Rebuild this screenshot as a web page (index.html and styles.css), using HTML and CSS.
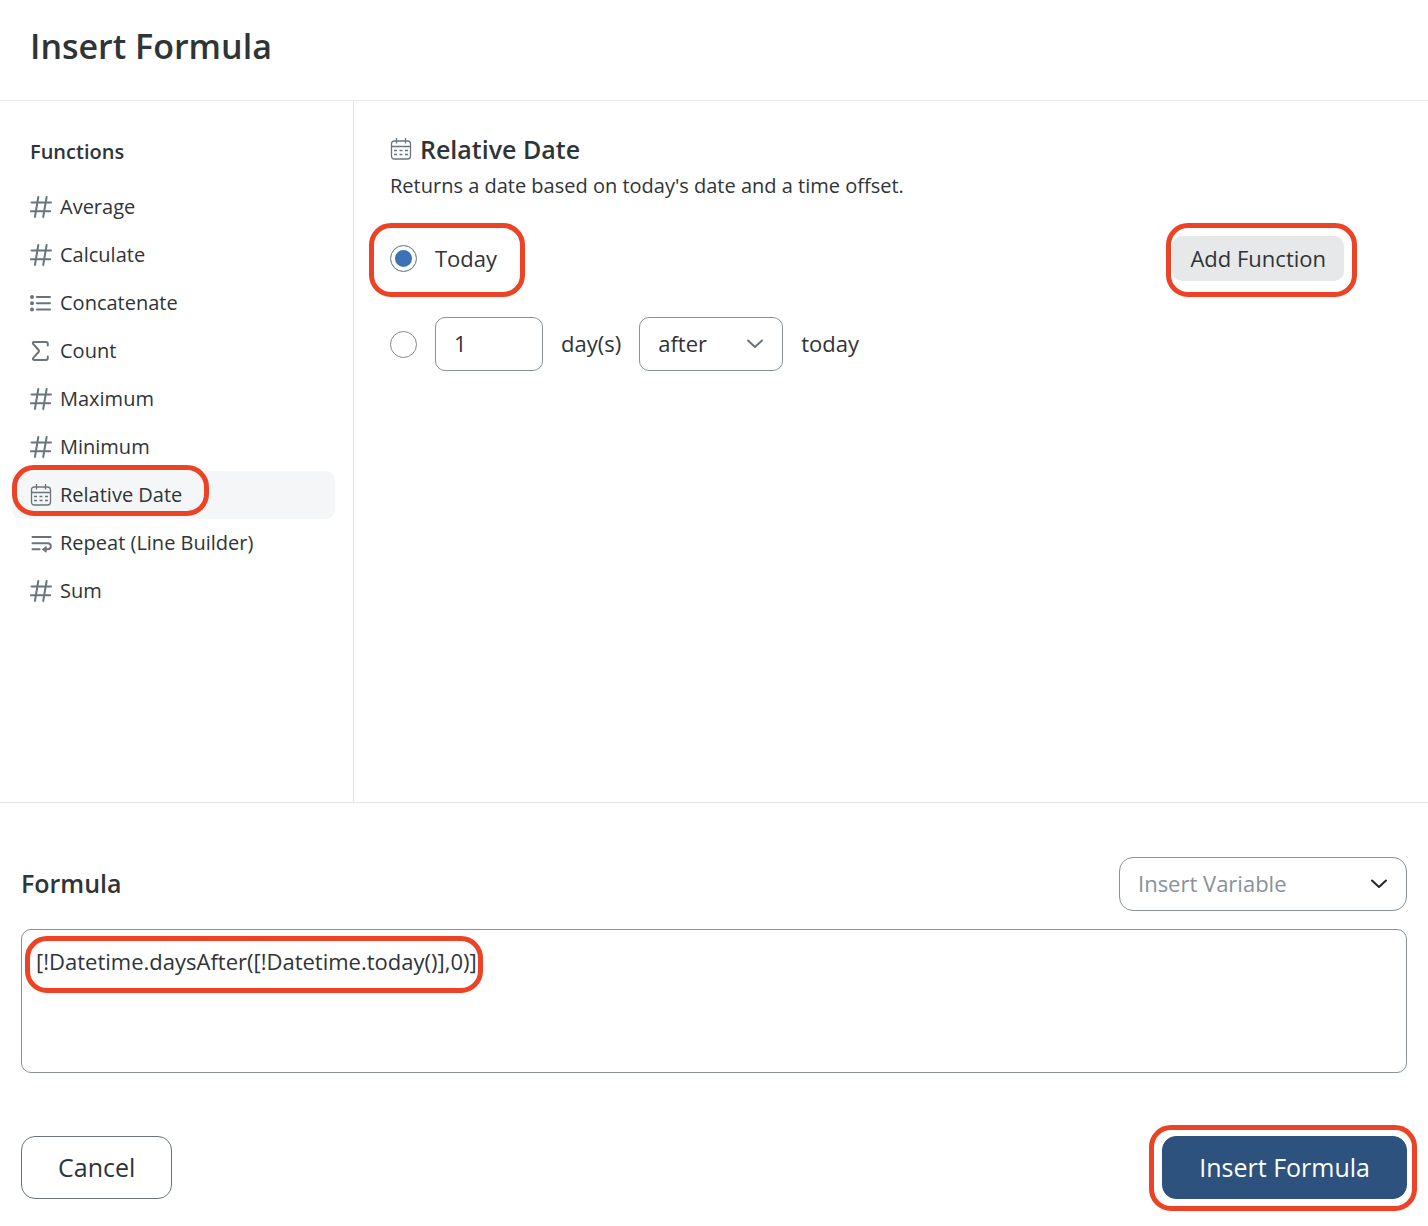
FILE: index.html
```html
<!DOCTYPE html>
<html lang="en">
<head>
  <meta charset="UTF-8" />
  <meta name="viewport" content="width=device-width, initial-scale=1.0"/>
  <title>Insert Formula</title>
  <link rel="stylesheet" href="styles.css">
</head>
<body>
  <!-- shared icons -->
  <svg class="icon-defs" aria-hidden="true">
    <symbol id="icon-hash" viewBox="0 0 22 22">
      <path d="M1.5 6.5H21M0.8 15.2H20.2M8.3 1L4.9 21M16.6 1L13.2 21"/>
    </symbol>
    <symbol id="icon-list" viewBox="0 0 22 22">
      <path d="M6.8 5H20M6.8 11.2H20M6.8 17.4H20"/>
      <path class="dots" d="M2 5h.01M2 11.2h.01M2 17.4h.01"/>
    </symbol>
    <symbol id="icon-sigma" viewBox="0 0 22 22">
      <path d="M17.8 5.4V3.9Q17.8 2 15.9 2H4.4Q2 2.2 3.3 4.2L8.6 10Q9.5 11 8.6 12L3.3 17.8Q2 19.8 4.4 20H15.9Q17.8 20 17.8 18.1V16.6"/>
    </symbol>
    <symbol id="icon-calendar" viewBox="0 0 22 22">
      <path class="thin" d="M4.3 3H17.5Q20.5 3 20.5 6V18Q20.5 21 17.5 21H4.5Q1.5 21 1.5 18V6Q1.5 3 4.5 3ZM1.5 8.5H20.5M6.5 0V5.5M15.5 0V5.5"/>
      <path class="thin" d="M4 12.5H7M9.5 12.5H12.5M15 12.5H18M4 16.5H7M9.5 16.5H12.5M15 16.5H18"/>
    </symbol>
    <symbol id="icon-wrap" viewBox="0 0 22 22">
      <path d="M2.5 5H20.6M2.5 11.2H17.8Q20.8 11.4 20.8 14.2Q20.8 17 17.8 17.2H14.5M2.5 17.2H9.6"/>
      <path class="solid" d="M12.6 17.2L16.2 14.6V19.8Z"/>
    </symbol>
    <symbol id="icon-chevron" viewBox="0 0 18 18">
      <path d="M2 5.5L9 12L16 5.5"/>
    </symbol>
  </svg>

  <header class="header">
    <h1>Insert Formula</h1>
  </header>

  <div class="panel">
    <nav class="sidebar">
      <h2>Functions</h2>
      <ul>
        <li><button type="button"><svg class="icon"><use href="#icon-hash"/></svg>Average</button></li>
        <li><button type="button"><svg class="icon"><use href="#icon-hash"/></svg>Calculate</button></li>
        <li><button type="button"><svg class="icon"><use href="#icon-list"/></svg>Concatenate</button></li>
        <li><button type="button"><svg class="icon"><use href="#icon-sigma"/></svg>Count</button></li>
        <li><button type="button"><svg class="icon"><use href="#icon-hash"/></svg>Maximum</button></li>
        <li><button type="button"><svg class="icon"><use href="#icon-hash"/></svg>Minimum</button></li>
        <li class="active">
          <button type="button"><svg class="icon"><use href="#icon-calendar"/></svg>Relative Date</button>
          <span class="ring ring-item"></span>
        </li>
        <li><button type="button"><svg class="icon"><use href="#icon-wrap"/></svg>Repeat (Line Builder)</button></li>
        <li><button type="button"><svg class="icon"><use href="#icon-hash"/></svg>Sum</button></li>
      </ul>
    </nav>

    <main class="content">
      <h2><svg class="icon"><use href="#icon-calendar"/></svg>Relative Date</h2>
      <p>Returns a date based on today's date and a time offset.</p>

      <div class="row row-today">
        <div class="option">
          <input type="radio" id="today" name="when" checked>
          <label for="today">Today</label>
          <span class="ring ring-today"></span>
        </div>
        <div class="add">
          <button type="button" class="btn-add">Add Function</button>
          <span class="ring ring-add"></span>
        </div>
      </div>

      <div class="row">
        <input type="radio" id="offset" name="when" aria-label="Offset from today">
        <input type="text" id="days" class="field days" value="1">
        <label for="days">day(s)</label>
        <div class="select">
          <select class="field" aria-label="Direction">
            <option>after</option>
            <option>before</option>
          </select>
          <svg class="chevron"><use href="#icon-chevron"/></svg>
        </div>
        <span class="unit">today</span>
      </div>
    </main>
  </div>

  <footer class="footer">
    <div class="formula-head">
      <label for="formula">Formula</label>
      <div class="select variable">
        <select class="field" aria-label="Insert Variable">
          <option>Insert Variable</option>
        </select>
        <svg class="chevron"><use href="#icon-chevron"/></svg>
      </div>
    </div>
    <div class="formula-box">
      <textarea id="formula" spellcheck="false">[!Datetime.daysAfter([!Datetime.today()],0)]</textarea>
      <span class="ring ring-formula"></span>
    </div>
    <div class="actions">
      <button type="button" class="btn">Cancel</button>
      <div class="submit">
        <button type="button" class="btn btn-primary">Insert Formula</button>
        <span class="ring ring-submit"></span>
      </div>
    </div>
  </footer>
</body>
</html>
```
FILE: styles.css
```css
* {
  box-sizing: border-box;
}
body {
  margin: 0;
  min-height: 100vh;
  display: flex;
  flex-direction: column;
  font-family: "Open Sans", sans-serif;
  font-size: 22px;
  line-height: 30px;
  color: #2f3437;
  background-color: #fff;
}
h1, h2, p, ul {
  margin: 0;
  padding: 0;
}
button, input, select, textarea {
  margin: 0;
  font: inherit;
  color: inherit;
}
.icon-defs {
  position: absolute;
  width: 0;
  height: 0;
}
.icon {
  width: 22px;
  height: 22px;
  flex: none;
  fill: none;
  stroke: #68757b;
  stroke-width: 2;
  stroke-linecap: round;
  stroke-linejoin: round;
}
.dots {
  stroke-width: 4;
}
.thin {
  stroke-width: 1.3;
  stroke-linecap: butt;
}
.solid {
  fill: #68757b;
  stroke-width: 1;
}

.header {
  padding: 22px 30px 30px;
  border-bottom: 1px solid #e6e7e8;
}
h1 {
  font-size: 34px;
  line-height: 48px;
  font-weight: 600;
}

.panel {
  flex: 1;
  display: flex;
  border-bottom: 1px solid #e6e7e8;
}
.sidebar {
  width: 354px;
  flex: none;
  padding: 36px 18px 36px 12px;
  border-right: 1px solid #e6e7e8;
  font-size: 20px;
}
.sidebar h2 {
  padding-left: 18px;
  margin-bottom: 16px;
  font-size: 20px;
  line-height: 30px;
  font-weight: 600;
}
.sidebar ul {
  list-style: none;
}
.sidebar li {
  position: relative;
}
.sidebar button {
  display: flex;
  align-items: center;
  gap: 8px;
  width: 100%;
  height: 48px;
  padding: 0 18px;
  border: 0;
  border-radius: 9px;
  background: none;
  text-align: left;
}
.sidebar .active button {
  background-color: #f5f6f8;
}

.content {
  flex: 1;
  padding: 33px 84px 36px 36px;
}
.content h2 {
  display: flex;
  align-items: center;
  gap: 8px;
  font-size: 25px;
  line-height: 30px;
  font-weight: 600;
}
.content p {
  margin-top: 7px;
  font-size: 20px;
}
.row {
  display: flex;
  align-items: center;
  gap: 18px;
  margin-top: 36px;
}
.row-today {
  justify-content: space-between;
  margin-top: 35px;
}
.row label, .unit {
  padding-bottom: 2px;
}
.option {
  position: relative;
  display: flex;
  align-items: center;
  gap: 18px;
}
input[type="radio"] {
  appearance: none;
  width: 27px;
  height: 27px;
  border: 1px solid #7f8a91;
  border-radius: 50%;
  background-color: #fff;
}
input[type="radio"]:checked {
  background-color: #3d73b4;
  box-shadow: inset 0 0 0 4px #fff;
}
.field {
  height: 54px;
  padding: 0 18px 2px;
  border: 1px solid #87929a;
  border-radius: 10px;
  background-color: #fff;
}
.days {
  width: 108px;
}
.select {
  display: grid;
  align-items: center;
  width: 144px;
}
.select select {
  grid-area: 1 / 1;
  appearance: none;
  width: 100%;
}
.chevron {
  grid-area: 1 / 1;
  justify-self: end;
  width: 18px;
  height: 18px;
  margin-right: 19px;
  fill: none;
  stroke: #68757b;
  stroke-width: 2;
  stroke-linecap: round;
  stroke-linejoin: round;
  pointer-events: none;
}
.add, .submit, .formula-box {
  position: relative;
}
.btn-add {
  display: block;
  height: 45px;
  padding: 0 18px 2px;
  border: 0;
  border-radius: 10px;
  background-color: #e7e8ea;
}

.footer {
  padding: 54px 21px 27px;
}
.formula-head {
  display: flex;
  align-items: center;
  justify-content: space-between;
  margin-bottom: 18px;
}
.formula-head label {
  padding-bottom: 2px;
  font-size: 25px;
  font-weight: 600;
}
.variable {
  width: 288px;
}
.variable .field {
  border-radius: 14px;
  color: #87929a;
}
.variable .chevron {
  stroke: #22272a;
}
textarea {
  display: block;
  width: 100%;
  height: 144px;
  padding: 16px 14px;
  border: 1px solid #87929a;
  border-radius: 10px;
  resize: none;
}
.actions {
  display: flex;
  justify-content: space-between;
  margin-top: 63px;
}
.btn {
  display: block;
  height: 63px;
  padding: 0 36px 2px;
  border: 1px solid #68757b;
  border-radius: 14px;
  background-color: #fff;
  font-size: 25px;
}
.btn-primary {
  border-color: #2c527d;
  background-color: #2c527d;
  color: #fff;
}

/* red highlight rings */
.ring {
  position: absolute;
  border: 5px solid #ec4326;
  border-radius: 22px;
  pointer-events: none;
}
.ring-item {
  top: -6px;
  left: 0;
  width: 197px;
  height: 51px;
}
.ring-today {
  inset: -20px -28px -22px -21px;
}
.ring-add {
  inset: -13px -13px -16px -6px;
}
.ring-formula {
  top: 7px;
  left: 4px;
  width: 458px;
  height: 57px;
}
.ring-submit {
  inset: -11px -10px -12px -13px;
}
```
